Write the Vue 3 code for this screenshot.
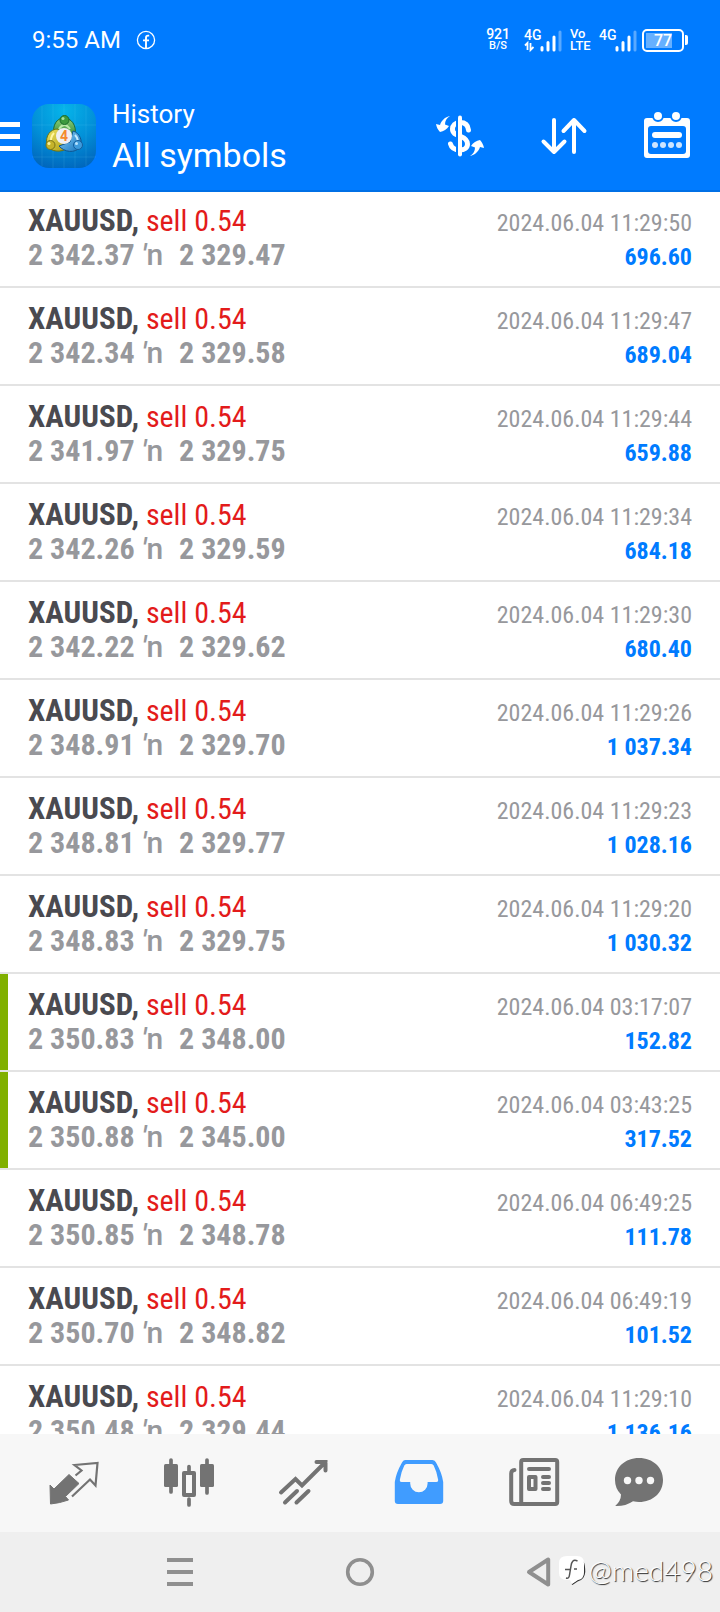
<script setup>
const deals = [
  { open: '2 342.37', close: '2 329.47', time: '2024.06.04 11:29:50', profit: '696.60' },
  { open: '2 342.34', close: '2 329.58', time: '2024.06.04 11:29:47', profit: '689.04' },
  { open: '2 341.97', close: '2 329.75', time: '2024.06.04 11:29:44', profit: '659.88' },
  { open: '2 342.26', close: '2 329.59', time: '2024.06.04 11:29:34', profit: '684.18' },
  { open: '2 342.22', close: '2 329.62', time: '2024.06.04 11:29:30', profit: '680.40' },
  { open: '2 348.91', close: '2 329.70', time: '2024.06.04 11:29:26', profit: '1 037.34' },
  { open: '2 348.81', close: '2 329.77', time: '2024.06.04 11:29:23', profit: '1 028.16' },
  { open: '2 348.83', close: '2 329.75', time: '2024.06.04 11:29:20', profit: '1 030.32' },
  { open: '2 350.83', close: '2 348.00', time: '2024.06.04 03:17:07', profit: '152.82', marked: true },
  { open: '2 350.88', close: '2 345.00', time: '2024.06.04 03:43:25', profit: '317.52', marked: true },
  { open: '2 350.85', close: '2 348.78', time: '2024.06.04 06:49:25', profit: '111.78' },
  { open: '2 350.70', close: '2 348.82', time: '2024.06.04 06:49:19', profit: '101.52' },
  { open: '2 350.48', close: '2 329.44', time: '2024.06.04 11:29:10', profit: '1 136.16' },
]
</script>

<template>
  <div class="screen">
    <header class="top">
      <div class="status">
        <span class="clock">9:55 AM</span>
        <svg class="fb" viewBox="0 0 20 20" width="20" height="20" aria-hidden="true">
          <circle cx="10" cy="10" r="8.6" fill="none" stroke="#fff" stroke-width="1.3" />
          <path d="M13.2 5.6H12Q10 5.6 10 7.8V18M7 10.4h6" fill="none" stroke="#fff" stroke-width="1.9" />
        </svg>
        <div class="indicators">
          <div class="speed"><span class="rate">921</span><span class="unit">B/S</span></div>
          <div class="network">
            <div class="gen">
              <span>4G</span>
              <svg viewBox="0 0 12 9" width="12" height="9" aria-hidden="true">
                <path d="M1 3.5 3.5 1V8M6.500 1V8L9.500 5" fill="none" stroke="#fff" stroke-width="1.8" />
              </svg>
            </div>
            <svg class="bars" viewBox="0 0 22 22" width="22" height="22" aria-hidden="true">
              <path d="M2 17.500v2.500M8 12.500V20M14 7V20" stroke="#fff" stroke-width="3" stroke-linecap="round" />
              <path d="M20 2V20" stroke="#fff" stroke-opacity=".35" stroke-width="3" stroke-linecap="round" />
            </svg>
          </div>
          <div class="volte"><span>Vo</span><span>LTE</span></div>
          <div class="network">
            <div class="gen"><span>4G</span></div>
            <svg class="bars" viewBox="0 0 22 22" width="22" height="22" aria-hidden="true">
              <path d="M2 17.500v2.500M8 12.500V20M14 7V20" stroke="#fff" stroke-width="3" stroke-linecap="round" />
              <path d="M20 2V20" stroke="#fff" stroke-opacity=".35" stroke-width="3" stroke-linecap="round" />
            </svg>
          </div>
          <div class="battery"><span class="cell"><span class="level">77</span></span><span class="knob"></span></div>
        </div>
      </div>

      <div class="toolbar">
        <button class="menu" type="button" aria-label="Menu"><i></i><i></i><i></i></button>
        <svg class="logo" viewBox="0 0 64 64" width="64" height="64" aria-hidden="true">
          <defs>
            <radialGradient id="sky" cx=".5" cy=".1" r="1">
              <stop offset="0" stop-color="#06b5ea" />
              <stop offset=".5" stop-color="#0290d8" />
              <stop offset="1" stop-color="#0060b8" />
            </radialGradient>
            <linearGradient id="leaf" x1="0" y1="0" x2="0" y2="1">
              <stop offset="0" stop-color="#8fd07c" /><stop offset="1" stop-color="#237d2c" />
            </linearGradient>
            <linearGradient id="gold" x1="0" y1="0" x2="1" y2="1">
              <stop offset="0" stop-color="#f1e564" /><stop offset="1" stop-color="#a99a12" />
            </linearGradient>
            <linearGradient id="water" x1="0" y1="0" x2="1" y2="1">
              <stop offset="0" stop-color="#8fd4fa" /><stop offset="1" stop-color="#1272bd" />
            </linearGradient>
          </defs>
          <rect width="64" height="64" rx="17" fill="url(#sky)" />
          <path d="M10 2V62M54 2V62M32 0V64M0 21H64M0 53H64M21 0V64M43 0V64" stroke="#7fe0ff" stroke-opacity=".13" />
          <path d="M22 31C20 21 25 14 32 14S45 21 43 31L38 35 26 31Z" fill="url(#leaf)" stroke="#1b6b36" />
          <path d="M27 25Q32 17 38 25" fill="none" stroke="#b9e9a8" stroke-width="2" />
          <path d="M26 25C18 25 13 32 15 41C18 48 29 49 36 44L29 37Z" fill="url(#gold)" stroke="#6b7412" />
          <path d="M22 29Q17 34 20 42" fill="none" stroke="#fff6a0" stroke-width="2" />
          <path d="M41 27C48 29 51 37 48 43C43 50 32 48 27 42L38 38Z" fill="url(#water)" stroke="#0e5590" />
          <path d="M43 31Q48 36 44 42" fill="none" stroke="#c4ebff" stroke-width="2" />
          <circle cx="32.500" cy="16" r="4.500" fill="#3d9a3f" stroke="#1c6b2c" />
          <circle cx="18.500" cy="41" r="4.500" fill="#c5b32a" stroke="#7b7315" />
          <circle cx="46" cy="41" r="4.500" fill="#3e9bdc" stroke="#155f9e" />
          <circle cx="31" cy="14.500" r="1.500" fill="#a8e09a" />
          <circle cx="17" cy="39.500" r="1.500" fill="#fbf3a0" />
          <circle cx="44.500" cy="39.500" r="1.500" fill="#b9e4ff" />
          <circle cx="32" cy="32" r="8" fill="#efeff2" />
          <text x="32" y="37" text-anchor="middle" class="logo-digit">4</text>
        </svg>
        <div class="titles">
          <span class="section">History</span>
          <h1>All symbols</h1>
        </div>
        <div class="actions">
          <button type="button" aria-label="Currency">
            <svg viewBox="0 0 48 48" width="48" height="48">
              <path d="M33.500 18C33 12.500 29.500 10.500 25 10.500C20 10.500 17.500 13.500 17.500 17C17.500 21.500 21 22.500 25 24C30 26 32.500 28 32.500 32C32.500 36 29 38 25 38C19.500 38 16.500 36 15.500 32" fill="none" stroke="#fff" stroke-width="5" stroke-linecap="round" />
              <path d="M22 3V45" stroke="#007bff" stroke-width="2" />
              <path d="M25 5.500V42.500" stroke="#fff" stroke-width="4" stroke-linecap="round" />
              <path d="M15 4C11.500 6 10 9 10 12.500L14 14C12 17 8.500 19.500 5 20C3 18 1.500 15 1 12L5 13C6.500 8.500 10 5 15 4Z" fill="#fff" />
              <path d="M35 44C38.500 42 40 39 40 35.500L36 34C38 31 41.500 28.500 45 28C47 30 48.500 33 49 36L45 35C43.500 39.500 40 43 35 44Z" fill="#fff" />
            </svg>
          </button>
          <button type="button" aria-label="Sort">
            <svg viewBox="0 0 48 48" width="48" height="48" fill="none" stroke="#fff" stroke-width="4" stroke-linecap="round" stroke-linejoin="round">
              <path d="M15 8V40M4.500 29.500 15 40 25.500 29.500M35 40V8M24.500 19 35 8 45.500 19" />
            </svg>
          </button>
          <button type="button" aria-label="Period">
            <svg viewBox="0 0 48 48" width="48" height="48">
              <path fill="#fff" fill-rule="evenodd" d="M4 6H44Q47 6 47 9V43Q47 46 44 46H4Q1 46 1 43V9Q1 6 4 6ZM8 14Q5 14 5 17V39Q5 42 8 42H40Q43 42 43 39V17Q43 14 40 14Z" />
              <circle cx="15" cy="4" r="5" fill="#fff" stroke="#007bff" stroke-width="2" />
              <circle cx="33" cy="4" r="5" fill="#fff" stroke="#007bff" stroke-width="2" />
              <rect x="9" y="20" width="30" height="6" rx="3" fill="#fff" />
              <g fill="#fff" fill-opacity=".8">
                <circle cx="12" cy="33" r="3" /><circle cx="20" cy="33" r="3" /><circle cx="28" cy="33" r="3" /><circle cx="36" cy="33" r="3" />
              </g>
            </svg>
          </button>
        </div>
      </div>
    </header>

    <main class="history">
      <ul>
        <li v-for="deal in deals" :key="deal.time" :class="{ marked: deal.marked }">
          <div class="line">
            <span><strong class="symbol">XAUUSD,</strong> <span class="side">sell 0.54</span></span>
            <time>{{ deal.time }}</time>
          </div>
          <div class="line">
            <span class="prices">{{ deal.open }} <span class="to"><i>'</i>n</span><span class="close">{{ deal.close }}</span></span>
            <span class="profit">{{ deal.profit }}</span>
          </div>
        </li>
      </ul>
    </main>

    <nav class="tabs" aria-label="Sections">
      <button type="button" aria-label="Quotes">
        <svg viewBox="0 0 52 52" width="52" height="52">
          <path d="M2 28 6 32 21 17.500 31 26.500 17.500 39.500 20.500 43Q12 46 2.500 47Z" fill="#737373" stroke="#737373" stroke-linejoin="round" />
          <path d="M27.500 18.500 33.500 13.500 26.500 8 49.500 6 47.500 28.500 42 22.500 24 39.500" fill="none" stroke="#737373" stroke-width="2.200" />
        </svg>
      </button>
      <button type="button" aria-label="Charts">
        <svg viewBox="0 0 52 52" width="52" height="52" fill="none" stroke="#737373" stroke-width="3.700" stroke-linecap="round">
          <path d="M8 3V35M26 9.500V14M26 42V48M44 3V36" />
          <rect x="1" y="7" width="14" height="23" rx="1.500" fill="#737373" stroke="none" />
          <rect x="37" y="7" width="14" height="23" rx="1.500" fill="#737373" stroke="none" />
          <rect x="21" y="16" width="10" height="22" stroke-width="4" stroke-linejoin="round" />
        </svg>
      </button>
      <button type="button" aria-label="Trade">
        <svg viewBox="0 0 52 52" width="52" height="52" fill="none" stroke="#737373" stroke-width="4" stroke-linecap="round">
          <path d="M3 35.500 17.500 22 24 28.500 47.500 5M38.500 5H47.500V13.500M7 45.500 19 34M18.500 45.500 30.500 34" />
        </svg>
      </button>
      <button type="button" aria-label="History" aria-current="page">
        <svg viewBox="0 0 52 52" width="52" height="52">
          <path fill="#409cff" fill-rule="evenodd" d="M12 3H39.500Q42 3 43 5.500Q49 16 50.200 25V44Q50.200 47 47 47H5Q1.800 47 1.800 44V25Q3 16 9 5.500Q10 3 12 3ZM13.500 7Q12 7 11.300 8.500Q8 15 6.800 23Q6.500 25 8.500 25H17.200V26.500A8.600 8.600 0 0 0 34.600 26.500V25H43.500Q45.400 25 45.200 23Q44 15 40.700 8.500Q40 7 38.500 7Z" />
        </svg>
      </button>
      <button type="button" aria-label="News">
        <svg viewBox="0 0 52 52" width="52" height="52" fill="none" stroke="#737373" stroke-width="4" stroke-linecap="round" stroke-linejoin="round">
          <rect x="13.200" y="3" width="36" height="44" rx="2" />
          <path d="M6.500 13Q3.200 13 3.200 16.500V44Q3.200 47 6.200 47H14M21 12H41M35 20H41M35 26H41M35 32H41" />
          <rect x="21" y="20" width="6.500" height="12" />
        </svg>
      </button>
      <button type="button" aria-label="Chat">
        <svg viewBox="0 0 52 52" width="52" height="52">
          <path d="M26 1C40 1 50 10.500 50 23S40 45 26 45Q23.500 45 20 44.200Q12 49.500 2.200 49Q8 44 8 37.500Q2 31.500 2 23C2 10.500 12 1 26 1Z" fill="#737373" />
          <circle cx="14.500" cy="23.500" r="3.700" fill="#f7f7f7" /><circle cx="26" cy="23.500" r="3.700" fill="#f7f7f7" /><circle cx="37.500" cy="23.500" r="3.700" fill="#f7f7f7" />
        </svg>
      </button>
    </nav>

    <div class="system">
      <button type="button" aria-label="Recent apps">
        <svg viewBox="0 0 32 32" width="32" height="32"><path d="M3 4H29M3 16H29M3 28H29" stroke="#8f8f8f" stroke-width="4" /></svg>
      </button>
      <button type="button" aria-label="Home">
        <svg viewBox="0 0 32 32" width="32" height="32"><circle cx="16" cy="16" r="12.300" fill="none" stroke="#8f8f8f" stroke-width="3.600" /></svg>
      </button>
      <button type="button" aria-label="Back">
        <svg viewBox="0 0 32 32" width="32" height="32"><path d="M24.200 3.500V28.500L5 16Z" fill="none" stroke="#8f8f8f" stroke-width="4" stroke-linejoin="round" /></svg>
      </button>
      <div class="credit">
        <svg viewBox="0 0 26 30" width="26" height="30" aria-hidden="true">
          <path d="M24 7Q25.500 10 25.500 17Q25 24 19 25.500L13 29.500" fill="none" stroke="#333" stroke-width="1.500" />
          <path d="M8 1H18Q25 1 25 8V17Q25 24 19 25L13 29 11 25H8Q0 25 0 18V8Q0 1 8 1Z" fill="#fff" />
          <path d="M18.500 6C14 4 12.500 7 12 11L10.500 20Q10 24 7 23M6 14.500H11M15 14H18" fill="none" stroke="#555" stroke-width="1.500" />
        </svg>
        <span>@med498</span>
      </div>
    </div>
  </div>
</template>

<style>
body {
  margin: 0;
  background: #efefef;
}
</style>

<style scoped>
.screen {
  display: flex;
  flex-direction: column;
  height: 100vh;
  overflow: hidden;
  background: #fff;
  font-family: Roboto, "Liberation Sans", sans-serif;
}
button {
  display: flex;
  align-items: center;
  justify-content: center;
  margin: 0;
  padding: 0;
  border: 0;
  background: none;
}
svg {
  display: block;
  flex: none;
  overflow: visible;
}
.top {
  flex: none;
  color: #fff;
  background: #007bff;
  border-bottom: 2px solid #0070e6;
}
.status {
  display: flex;
  align-items: center;
  height: 80px;
  padding: 0 32px;
}
.clock {
  font-size: 24px;
  line-height: 32px;
}
.fb {
  margin-left: 15px;
}
.indicators {
  display: flex;
  align-items: center;
  margin-left: auto;
  font-weight: 500;
}
.speed {
  display: flex;
  flex-direction: column;
  align-items: center;
  margin-right: 14px;
  font-size: 14px;
  line-height: 12px;
}
.unit {
  font-size: 11px;
}
.network {
  display: flex;
  height: 24px;
}
.gen {
  width: 16px;
  font-size: 14px;
  line-height: 14px;
}
.bars {
  align-self: flex-end;
}
.volte {
  display: flex;
  flex-direction: column;
  width: 20px;
  margin: 0 9px 0 8px;
  font-size: 13px;
  line-height: 12px;
}
.battery {
  display: flex;
  align-items: center;
  margin-left: 5px;
}
.cell {
  box-sizing: border-box;
  width: 42px;
  height: 23px;
  padding: 2px;
  border: 2px solid #fff;
  border-radius: 5px;
  background: linear-gradient(#66b0ff, #66b0ff) 2px 2px / 26px 15px no-repeat;
}
.level {
  display: block;
  font-size: 16px;
  line-height: 15px;
  text-align: center;
}
.knob {
  width: 3px;
  height: 10px;
  margin-left: 1px;
  border-radius: 0 2px 2px 0;
  background: #fff;
}
.toolbar {
  display: flex;
  align-items: center;
  height: 108px;
  padding: 2px 29px 0 0;
}
.menu {
  flex-direction: column;
  gap: 7px;
  width: 20px;
}
.menu i {
  width: 20px;
  height: 5px;
  background: #fff;
}
.logo {
  margin: 0 16px 0 12px;
}
.logo-digit {
  font: 700 14px Roboto, sans-serif;
  fill: #f58a2c;
}
.titles {
  flex: 1;
}
.section {
  display: block;
  font-size: 26px;
  line-height: 38px;
}
h1 {
  margin: 0;
  font-size: 34px;
  font-weight: 400;
  line-height: 44px;
}
.actions {
  display: flex;
  gap: 56px;
}
.history {
  flex: 1;
  min-height: 0;
  overflow: hidden;
  font-family: "Roboto Condensed", "Liberation Sans Narrow", Roboto, sans-serif;
}
ul {
  margin: -2px 0 0;
  padding: 0;
  list-style: none;
}
li {
  padding: 14px 28px;
  border-bottom: 2px solid #e3e3e3;
}
.marked {
  background: linear-gradient(#80b000, #80b000) 0 0 / 8px 100% no-repeat padding-box;
}
.line {
  display: flex;
  align-items: baseline;
  justify-content: space-between;
  height: 34px;
  font-size: 30px;
  line-height: 34px;
  white-space: nowrap;
}
.symbol {
  color: #4a4a50;
  font-size: 31px;
}
.side {
  color: #e31b1b;
}
time {
  color: #97989c;
  font-size: 24px;
}
.prices {
  color: #97989c;
  font-weight: 700;
}
.to {
  font-family: Roboto, sans-serif;
  font-weight: 500;
}
.close {
  margin-left: 16px;
}
.profit {
  color: #007bff;
  font-size: 24px;
  font-weight: 700;
}
.tabs {
  display: grid;
  grid-template-columns: repeat(5, 115fr) 96fr;
  flex: none;
  height: 98px;
  padding: 0 33px 0 16px;
  background: #f7f7f7;
}
.system {
  position: relative;
  display: grid;
  grid-template-columns: repeat(3, 1fr);
  flex: none;
  height: 80px;
  padding: 0 12.5%;
  background: #efefef;
}
.credit {
  position: absolute;
  right: 7px;
  bottom: 26px;
  display: flex;
  align-items: center;
  gap: 4px;
  color: #fff;
  font-family: Lato, sans-serif;
  font-size: 28px;
  font-weight: 300;
  line-height: 32px;
  text-shadow: 1px 1px 1px #222;
}
</style>
